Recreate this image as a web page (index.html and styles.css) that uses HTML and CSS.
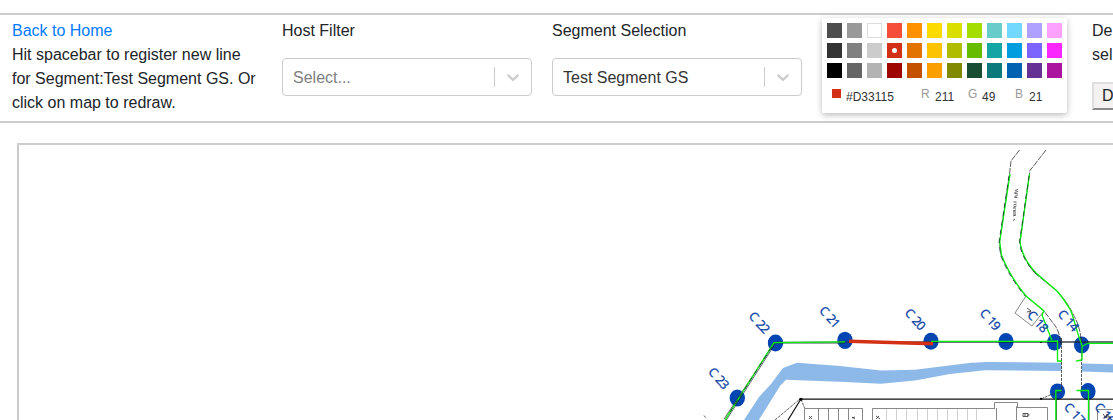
FILE: index.html
```html
<!DOCTYPE html>
<html lang="en">
<head>
<meta charset="utf-8">
<title>Segment Editor</title>
<link rel="stylesheet" href="styles.css">
</head>
<body>
<header class="toolbar">
  <section class="panel">
    <a class="home" href="#">Back to Home</a>
    <p class="hint">Hit spacebar to register new line for Segment:Test Segment GS. Or click on map to redraw.</p>
  </section>
  <section class="panel">
    <label class="title">Host Filter</label>
    <div class="select">
      <span class="value placeholder">Select...</span>
      <span class="separator"></span>
      <span class="arrow"><svg width="20" height="20" viewBox="0 0 20 20"><path d="M4.516 7.548c0.436-0.446 1.043-0.481 1.576 0l3.908 3.747 3.908-3.747c0.533-0.481 1.141-0.446 1.574 0 0.436 0.445 0.408 1.197 0 1.615-0.406 0.418-4.695 4.502-4.695 4.502-0.217 0.223-0.502 0.335-0.787 0.335s-0.57-0.112-0.789-0.335c0 0-4.287-4.084-4.695-4.502s-0.436-1.17 0-1.615z"/></svg></span>
    </div>
  </section>
  <section class="panel">
    <label class="title">Segment Selection</label>
    <div class="select">
      <span class="value">Test Segment GS</span>
      <span class="separator"></span>
      <span class="arrow"><svg width="20" height="20" viewBox="0 0 20 20"><path d="M4.516 7.548c0.436-0.446 1.043-0.481 1.576 0l3.908 3.747 3.908-3.747c0.533-0.481 1.141-0.446 1.574 0 0.436 0.445 0.408 1.197 0 1.615-0.406 0.418-4.695 4.502-4.695 4.502-0.217 0.223-0.502 0.335-0.787 0.335s-0.57-0.112-0.789-0.335c0 0-4.287-4.084-4.695-4.502s-0.436-1.17 0-1.615z"/></svg></span>
    </div>
  </section>
  <section class="panel picker-panel">
    <div class="picker">
      <div class="swatches">
        <i style="background:#4D4D4D"></i><i style="background:#999999"></i><i class="white" style="background:#FFFFFF"></i><i style="background:#F44E3B"></i><i style="background:#FE9200"></i><i style="background:#FCDC00"></i><i style="background:#DBDF00"></i><i style="background:#A4DD00"></i><i style="background:#68CCCA"></i><i style="background:#73D8FF"></i><i style="background:#AEA1FF"></i><i style="background:#FDA1FF"></i>
        <i style="background:#333333"></i><i style="background:#808080"></i><i style="background:#CCCCCC"></i><i class="active" style="background:#D33115"></i><i style="background:#E27300"></i><i style="background:#FCC400"></i><i style="background:#B0BC00"></i><i style="background:#68BC00"></i><i style="background:#16A5A5"></i><i style="background:#009CE0"></i><i style="background:#7B64FF"></i><i style="background:#FA28FF"></i>
        <i style="background:#000000"></i><i style="background:#666666"></i><i style="background:#B3B3B3"></i><i style="background:#9F0500"></i><i style="background:#C45100"></i><i style="background:#FB9E00"></i><i style="background:#808900"></i><i style="background:#194D33"></i><i style="background:#0C797D"></i><i style="background:#0062B1"></i><i style="background:#653294"></i><i style="background:#AB149E"></i>
      </div>
      <div class="fields">
        <span class="chip"></span><span class="hex">#D33115</span>
        <span class="channel"><b>R</b><span>211</span></span>
        <span class="channel"><b>G</b><span>49</span></span>
        <span class="channel"><b>B</b><span>21</span></span>
      </div>
    </div>
  </section>
  <section class="panel actions">
    <p class="action-text">De<br>sel</p>
    <button class="action">D</button>
  </section>
</header>
<main class="map">
<svg class="plan" width="1094" height="275" viewBox="19 145 1094 275">
  <!-- river -->
  <path class="river" d="M742 423L759 397L771 384L783 368L797 362.7L840 366L881 370.5L915 369.8L965 363.500Q980 361.800 990 362L1061.500 362.700V371L985 370.3L950 374L915 380.5L881 383.7L845 382L786 379.8L780 386L757 423ZM1082 363.5L1113 364.2V372.6L1082 371.4Z"/>
  <!-- stations -->
  <g class="station">
    <ellipse cx="775.5" cy="343" rx="7.7" ry="8.5"/><ellipse cx="845" cy="340.3" rx="7.7" ry="8.6"/><ellipse cx="931" cy="341.3" rx="7.6" ry="8.5"/><ellipse cx="1006" cy="341.5" rx="7.6" ry="8.5"/><ellipse cx="1054.6" cy="342.3" rx="7.6" ry="8.3"/><ellipse cx="1081.7" cy="345" rx="7.7" ry="8.4"/><ellipse cx="1057.5" cy="391.7" rx="7.6" ry="8.3"/><ellipse cx="1088" cy="391.5" rx="7.6" ry="8.4"/><ellipse cx="737.3" cy="398" rx="7.7" ry="8.6"/>
  </g>
  <!-- survey outlines -->
  <g class="ink">
    <path class="track" d="M1019.5 150L1011 161L1009.5 174L999.5 242L1001 255Q1010 277 1026 296L1044 311L1056 327Q1060 334 1061 345"/>
    <path class="track" d="M1046 150L1030 170.5L1020 242L1021 249Q1028 267 1037 275L1058 292Q1068 303 1073 314Q1081 328 1081 342"/>
    <path class="fine" d="M1026 296L1015 313L1032 326L1044 311"/>
    <path class="dash" d="M1061.5 338V392M1081.5 338V392"/>
    <path d="M724 419L775 342.3L931 341.7H1113M1056.5 398V420M1089 398V420"/>
    <path class="dash" d="M775 420L800 399M801 399L804.5 408M1041 399L1050 395L1060 392"/>
    <path class="fine" d="M804.5 420V408.5H862.5V420M818.5 408.5V420M828.5 408.5V420M838.5 408.5V420M848.5 408.5V420M872.5 420V408.5H995M994.500 408V402.5H1017.5V406.500H1016.500V420M996.500 408V420M1017 407.5H1047.5V420M1097.5 420V409.5H1113"/>
    <path class="pale" d="M886.5 409V420M896.5 409V420M906.5 409V420M917.5 409V420M927.5 409V420M937.5 409V420M947.5 409V420M957.5 409V420M967.5 409V420M976.5 409V420"/>
  </g>
  <path class="wall" d="M788 420L800.8 399.3M799 399.2H1113"/>
  <circle cx="801" cy="399.3" r="1.5"/><circle cx="1041" cy="342" r="1.1"/><circle cx="1041" cy="398.8" r="1.1"/>
  <!-- recorded segments -->
  <path class="texture" d="M774 343.100H845M726 420.500L775 344M931 342.300H1113"/>
  <g class="route">
    <path d="M725 420L774 342.6L845 341.8M931 341.3H1052L1057.5 341V361H1062"/>
    <path d="M1010 174L999.7 242L1001.5 255Q1010 277 1026 296L1044 311L1042 315L1052 340.5"/>
    <path d="M1029.5 174L1020 242Q1022 258 1036 273L1057 291Q1064 299 1071 311Q1074 320 1078 334L1082 345.5V360L1076 361.2M1082 346.5L1088 343.3H1113M1055.8 420V390.5H1061.5M1076.5 390.5H1088.5V420"/>
  </g>
  <path class="texture sparse" d="M1009 176L999 242L1000.500 255Q1009 277 1025 296M1029 176L1019.500 242Q1021 258 1036 274M730 412L773 345"/>
  <path class="selected" d="M849 341.2L933 343.7"/>
  <!-- station names -->
  <g class="name">
    <text transform="translate(758.900 322.6) rotate(48)" y="4">C <tspan dx="1.5">22</tspan></text>
    <text transform="translate(829.200 317) rotate(48)" y="4">C <tspan dx="1.5">21</tspan></text>
    <text transform="translate(914.7 319.3) rotate(48)" y="4">C <tspan dx="1.5">20</tspan></text>
    <text transform="translate(989.7 319.5) rotate(48)" y="4">C <tspan dx="1.5">19</tspan></text>
    <text transform="translate(1037.3 321.6) rotate(48)" y="4">C <tspan dx="1.5">18</tspan></text>
    <text transform="translate(1067.9 320.5) rotate(48)" y="4">C <tspan dx="1.5">14</tspan></text>
    <text transform="translate(718.2 378.3) rotate(48)" y="4">C <tspan dx="1.5">23</tspan></text>
    <text transform="translate(1074 413.500) rotate(48)" y="4">C <tspan dx="1.5">17</tspan></text>
    <text transform="translate(1104.500 413.500) rotate(48)" y="4">C <tspan dx="1.5">16</tspan></text>
  </g>
  <!-- small plan marks -->
  <g class="mark">
    <path d="M1018 189.500l-3 1m3 1l-3.500 1m3.500 1.5l-3.500-.5m3 2l-3 1m3 1l-3 0m2 4.500l-3 0m3 2l-3 1m3 1l-3 1m2.500 1l-3 0m3 2l-3 1m3 1l-3 0m3 2h-3m3 1l-3 1m2 3l-2 1.500"/>
    <path d="M809 416l3 3m0-3l-3 3M852 417l3 2m0-2l-3 1M876 416l4 3m-1-3l-3 3M1023 416.500v-3h2v3m0-3l3 0v3m-1-1.500h2.500m-6.500 1.500h5M1027 308l4 3m-4 1l4-1m-2 3l2-3M1103 414l3 4 1-4 3 4m-6-1h7M704 415.500l1.500 2"/>
  </g>
</svg>
</main>
</body>
</html>
```
FILE: styles.css
```css
* { box-sizing: border-box; }

body {
  display: flex;
  flex-direction: column;
  margin: 0;
  height: 420px;
  padding-top: 13px;
  overflow: hidden;
  background: #fff;
  color: #212529;
  font: 16px/24px "Liberation Sans", Arial, sans-serif;
}

.toolbar {
  display: flex;
  flex: none;
  gap: 20px;
  height: 110px;
  padding: 4px 0 0 12px;
  border-top: 2px solid #ccc;
  border-bottom: 2px solid #ccc;
}

.panel { flex: 0 0 250px; }
.picker-panel { margin-top: -1px; }
.actions { flex: 1 1 0; min-width: 0; overflow: hidden; }
.home { display: block; color: #007bff; text-decoration: none; }
.hint, .action-text { margin: 0; }
.title { display: block; margin-bottom: 15px; }

.select {
  display: flex;
  align-items: center;
  height: 38px;
  border: 1px solid #ccc;
  border-radius: 4px;
}
.value { flex: 1; padding: 2px 0 0 10px; color: #333; }
.placeholder { color: #808080; }
.separator { width: 1px; height: 20px; background: #ccc; }
.arrow { display: flex; padding: 8px; fill: #ccc; }

.picker {
  width: 245px;
  height: 95px;
  padding: 5px 0 0 5px;
  border-radius: 2px;
  background: #fff;
  box-shadow: 0 2px 10px rgba(0, 0, 0, .12), 0 2px 5px rgba(0, 0, 0, .16);
}
.swatches { display: grid; grid-template-columns: repeat(12, 15px); grid-auto-rows: 15px; gap: 5px; }
.white { box-shadow: inset 0 0 0 1px #ddd; }
.active { display: grid; place-items: center; }
.active::after { content: ""; width: 5px; height: 5px; border-radius: 50%; background: #fff; }

.fields { display: flex; height: 26px; padding: 11px 0 0 5px; font-size: 12px; line-height: 15px; color: #333; }
.chip { width: 9px; height: 9px; margin-right: 5px; background: #d33115; }
.hex { width: 75px; padding-top: 1px; }
.channel { display: flex; width: 47px; }
.channel b { width: 14px; margin-top: -2px; font-weight: 400; color: #999; }
.channel span { padding-top: 1px; }

.action {
  width: 100%;
  height: 28px;
  margin-top: 15px;
  padding: 0 8px;
  border: 2px outset #dfdfdf;
  border-right: 0;
  background: #f4f2f1;
  color: #212529;
  font: inherit;
  line-height: 24px;
  text-align: left;
}

.map {
  flex: 1;
  min-height: 0;
  margin: 20px 0 0 17px;
  overflow: hidden;
  border: solid #ccc;
  border-width: 2px 0 0 2px;
}
.plan { display: block; }
.river { fill: #8db9e8; }
.station { fill: #0045b1; }
.ink, .wall, .route, .texture, .selected, .mark { fill: none; }
.ink { stroke: #333; stroke-width: .8; }
.track { stroke-dasharray: 6 1; }
.dash { stroke-dasharray: 3 1; }
.fine { stroke: #555; stroke-width: .7; }
.pale { stroke: #bbb; stroke-width: .7; }
.wall { stroke: #111; stroke-width: 1.2; }
.route { stroke: #05f00a; stroke-width: 1.3; }
.texture { stroke: #123; stroke-width: .7; }
.sparse { stroke-dasharray: 5 4; }
.selected { stroke: #d33115; stroke-width: 3.4; }
.name { fill: #0b3fa5; stroke: #0b3fa5; stroke-width: .25; font: 12.5px "Noto Sans", "Open Sans", sans-serif; text-anchor: middle; letter-spacing: -.9px; }
.mark { stroke: #333; stroke-width: .8; }
```
